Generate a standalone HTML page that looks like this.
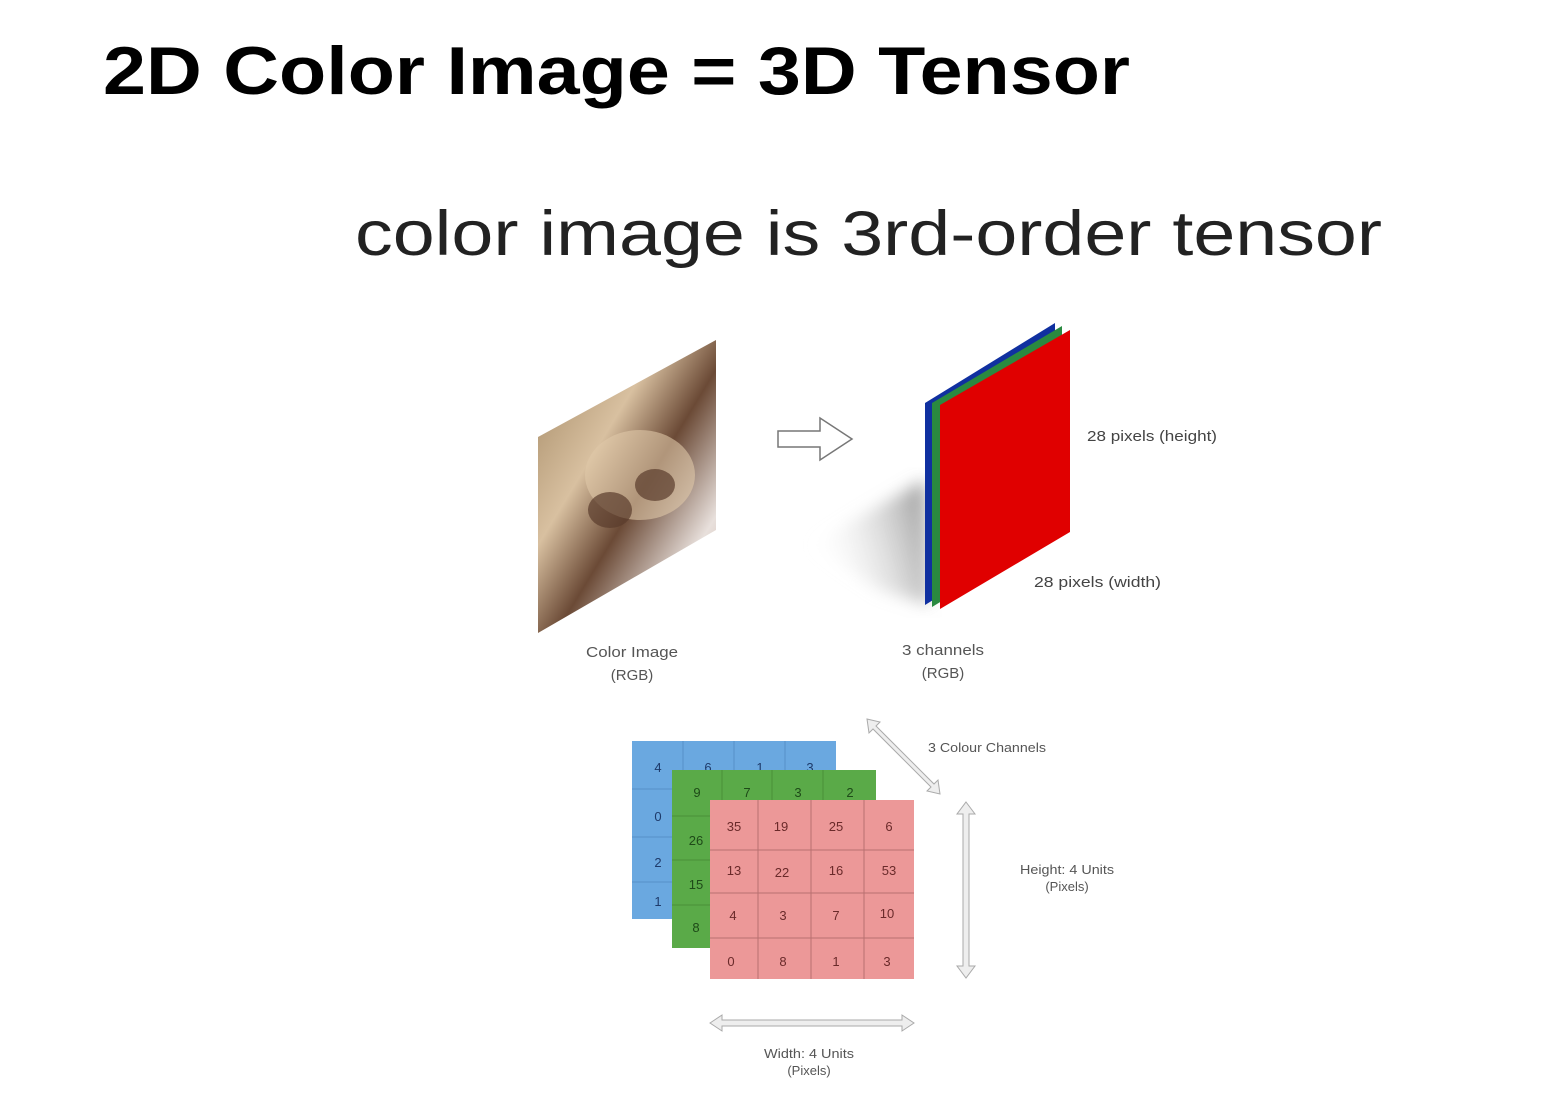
<!DOCTYPE html>
<html><head><meta charset="utf-8"><style>
body{margin:0;width:1546px;height:1105px;background:#fff;overflow:hidden;font-family:"Liberation Sans",sans-serif}
</style></head><body>
<svg width="1546" height="1105" xmlns="http://www.w3.org/2000/svg" style="position:absolute;left:0;top:0">
<defs>
<linearGradient id="cat" x1="0" y1="0" x2="1" y2="1">
<stop offset="0" stop-color="#a08560"/><stop offset="0.35" stop-color="#d8c0a0"/><stop offset="0.55" stop-color="#6b4a36"/><stop offset="0.8" stop-color="#e8e0dc"/><stop offset="1" stop-color="#c8a898"/></linearGradient>
<linearGradient id="sh" x1="1" y1="0.3" x2="0" y2="0.6"><stop offset="0" stop-color="#777" stop-opacity="0.7"/><stop offset="1" stop-color="#fff" stop-opacity="0"/></linearGradient>
<filter id="bl"><feGaussianBlur stdDeviation="8"/></filter>
</defs>
<text x="103" y="94" font-size="68" font-weight="bold" fill="#000" textLength="1027" lengthAdjust="spacingAndGlyphs">2D Color Image = 3D Tensor</text>
<text x="355" y="255" font-size="63" fill="#222" textLength="1027" lengthAdjust="spacingAndGlyphs">color image is 3rd-order tensor</text>
<!-- cat -->
<polygon points="538,437 716,340 716,530 538,633" fill="url(#cat)"/>
<ellipse cx="640" cy="475" rx="55" ry="45" fill="#e0c8a8" opacity="0.6"/>
<ellipse cx="610" cy="510" rx="22" ry="18" fill="#5a3c2c" opacity="0.7"/>
<ellipse cx="655" cy="485" rx="20" ry="16" fill="#5a3c2c" opacity="0.7"/>
<text x="632" y="657" font-size="15" fill="#555" text-anchor="middle" textLength="92" lengthAdjust="spacingAndGlyphs">Color Image</text>
<text x="632" y="680" font-size="15" fill="#555" text-anchor="middle">(RGB)</text>
<!-- arrow -->
<polygon points="778,431 820,431 820,418 852,439 820,460 820,447 778,447" fill="#fff" stroke="#777" stroke-width="1.5"/>
<!-- slab shadow -->
<polygon points="810,545 925,480 930,605 880,590" fill="url(#sh)" filter="url(#bl)"/>
<polygon points="925,403 1055,323 1055,525 925,605" fill="#1030a0"/>
<polygon points="932,403 1062,326 1062,528 932,607" fill="#2a8a40"/>
<polygon points="940,405 1070,330 1070,532 940,609" fill="#e00000"/>
<text x="1087" y="441" font-size="15" fill="#444" textLength="130" lengthAdjust="spacingAndGlyphs">28 pixels (height)</text>
<text x="1034" y="587" font-size="15" fill="#444" textLength="127" lengthAdjust="spacingAndGlyphs">28 pixels (width)</text>
<text x="943" y="655" font-size="15" fill="#555" text-anchor="middle" textLength="82" lengthAdjust="spacingAndGlyphs">3 channels</text>
<text x="943" y="678" font-size="15" fill="#555" text-anchor="middle">(RGB)</text>
<!-- grids -->
<g font-size="13" text-anchor="middle">
<rect x="632" y="741" width="204" height="178" fill="#6aa8e0"/>
<g stroke="#5590c8" stroke-width="1"><line x1="683" y1="741" x2="683" y2="919"/><line x1="734" y1="741" x2="734" y2="919"/><line x1="785" y1="741" x2="785" y2="919"/><line x1="632" y1="789" x2="836" y2="789"/><line x1="632" y1="837" x2="836" y2="837"/><line x1="632" y1="882" x2="836" y2="882"/></g>
<g fill="#1e3a6a"><text x="658" y="772">4</text><text x="708" y="772">6</text><text x="760" y="772">1</text><text x="810" y="772">3</text><text x="658" y="821">0</text><text x="658" y="867">2</text><text x="658" y="906">1</text></g>
<rect x="672" y="770" width="204" height="178" fill="#5aaa48"/>
<g stroke="#4a9038"><line x1="722" y1="770" x2="722" y2="948"/><line x1="772" y1="770" x2="772" y2="948"/><line x1="823" y1="770" x2="823" y2="948"/><line x1="672" y1="816" x2="876" y2="816"/><line x1="672" y1="860" x2="876" y2="860"/><line x1="672" y1="905" x2="876" y2="905"/></g>
<g fill="#1e4a18"><text x="697" y="797">9</text><text x="747" y="797">7</text><text x="798" y="797">3</text><text x="850" y="797">2</text><text x="696" y="845">26</text><text x="696" y="889">15</text><text x="696" y="932">8</text></g>
<rect x="710" y="800" width="204" height="179" fill="#ec9898"/>
<g stroke="#b87070"><line x1="758" y1="800" x2="758" y2="979"/><line x1="811" y1="800" x2="811" y2="979"/><line x1="864" y1="800" x2="864" y2="979"/><line x1="710" y1="850" x2="914" y2="850"/><line x1="710" y1="893" x2="914" y2="893"/><line x1="710" y1="938" x2="914" y2="938"/></g>
<g fill="#6a2a2a"><text x="734" y="831">35</text><text x="781" y="831">19</text><text x="836" y="831">25</text><text x="889" y="831">6</text>
<text x="734" y="875">13</text><text x="782" y="877">22</text><text x="836" y="875">16</text><text x="889" y="875">53</text>
<text x="733" y="920">4</text><text x="783" y="920">3</text><text x="836" y="920">7</text><text x="887" y="918">10</text>
<text x="731" y="966">0</text><text x="783" y="966">8</text><text x="836" y="966">1</text><text x="887" y="966">3</text></g>
</g>
<!-- double arrows -->
<g fill="#eee" stroke="#aaa" stroke-width="1">
<polygon points="867,719 880,722 876,726 934,784 938,780 940,794 927,791 931,787 873,729 869,733"/>
<polygon points="966,802 975,814 969,814 969,966 975,966 966,978 957,966 963,966 963,814 957,814"/>
<polygon points="710,1023 722,1015 722,1020 902,1020 902,1015 914,1023 902,1031 902,1026 722,1026 722,1031"/>
</g>
<g font-size="13" fill="#555" text-anchor="middle">
<text x="987" y="752" textLength="118" lengthAdjust="spacingAndGlyphs">3 Colour Channels</text>
<text x="1067" y="874" textLength="94" lengthAdjust="spacingAndGlyphs">Height: 4 Units</text>
<text x="1067" y="891">(Pixels)</text>
<text x="809" y="1058" textLength="90" lengthAdjust="spacingAndGlyphs">Width: 4 Units</text>
<text x="809" y="1075">(Pixels)</text>
</g>
</svg>
</body></html>
